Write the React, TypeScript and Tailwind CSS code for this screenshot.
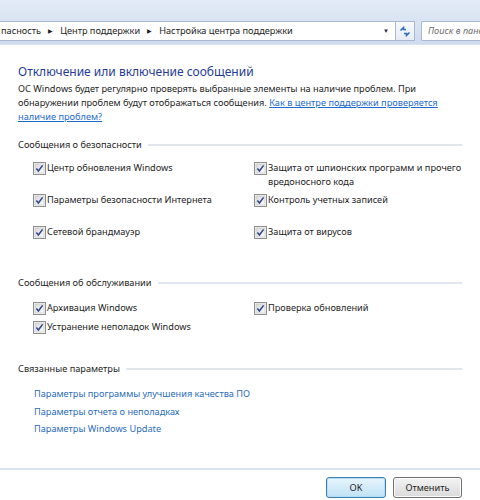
import React from 'react';

const FONT = '"Noto Sans", "Liberation Sans", sans-serif';

const CheckBox = () => (
  <svg width="13" height="13" viewBox="0 0 13 13" className="shrink-0">
    <defs>
      <linearGradient id="cbg" x1="0" y1="0" x2="1" y2="1">
        <stop offset="0" stopColor="#d8d8d8" />
        <stop offset="1" stopColor="#fbfbfb" />
      </linearGradient>
    </defs>
    <rect x="0.5" y="0.5" width="12" height="12" fill="#f4f4f4" stroke="#8e8f8f" />
    <rect x="2" y="2" width="9" height="9" fill="url(#cbg)" stroke="#c6c6c6" strokeWidth="0.6" />
    <path d="M3.4 6.6 L5.4 9 L9.6 3.4" fill="none" stroke="#2a448e" strokeWidth="1.5" />
  </svg>
);

const Option = ({ label }: { label: React.ReactNode }) => (
  <div className="flex items-start gap-[1px]">
    <div className="pt-[0.5px]">
      <CheckBox />
    </div>
    <span className="leading-[14px] text-[#1e1e1e] whitespace-nowrap">{label}</span>
  </div>
);

const SectionHeader = ({ title }: { title: string }) => (
  <div className="flex items-center gap-[6px] pr-[18px] h-[14px]">
    <span className="text-[#1e1e1e] leading-[14px] whitespace-nowrap">{title}</span>
    <div className="h-[2px] flex-1 bg-[#e1e6ee]" />
  </div>
);

export default function App() {
  return (
    <div
      className="w-[480px] h-[500px] bg-white overflow-hidden flex flex-col text-[9.2px]"
      style={{ fontFamily: FONT }}
    >
      {/* nav bar */}
      <div className="h-[45px] shrink-0 bg-gradient-to-b from-[#e2ebf6] to-[#cfdcee] flex items-start pt-[21px] gap-[6px] border-b border-[#dbe4ef]">
        <div className="flex items-center h-[20px] w-[415px] shrink-0">
          <div className="flex items-center h-full w-[396px] bg-white border border-l-0 border-[#a9b8cc] text-[#1e1e1e]">
            <span className="pl-[1px]">пасность</span>
            <span className="mx-[7px] text-[6px]">▶</span>
            <span>Центр поддержки</span>
            <span className="mx-[7px] text-[6px]">▶</span>
            <span className="whitespace-nowrap">Настройка центра поддержки</span>
            <div className="flex-1" />
            <span className="text-[6px] mr-[6px] text-[#1e2a4a]">▼</span>
          </div>
          <div className="h-full w-[19px] bg-gradient-to-b from-[#f8fafd] to-[#e6edf7] border border-l-0 border-[#a9b8cc] flex items-center justify-center">
            <svg width="12" height="11" viewBox="0 0 12 11">
              <path d="M1.5 4.5 L4.5 1.5 L4.5 3.5 L7 3.5" fill="none" stroke="#2d6bc4" strokeWidth="1.5" />
              <path d="M10.5 6.5 L7.5 9.5 L7.5 7.5 L5 7.5" fill="none" stroke="#2d6bc4" strokeWidth="1.5" />
            </svg>
          </div>
        </div>
        <div className="h-[20px] flex-1 bg-white border border-r-0 border-[#a9b8cc] rounded-l-[2px] flex items-center pl-[6px] italic text-[#6d6d6d] whitespace-nowrap overflow-hidden">
          Поиск в панели управления
        </div>
      </div>

      {/* content */}
      <div className="flex-1 flex flex-col pl-[18px]">
        <div className="mt-[17px] text-[12px] leading-[20px] text-[#1f3d99] whitespace-nowrap">
          Отключение или включение сообщений
        </div>
        <div className="leading-[14px] text-[#1e1e1e]">
          <div className="whitespace-nowrap">ОС Windows будет регулярно проверять выбранные элементы на наличие проблем. При</div>
          <div className="whitespace-nowrap">
            обнаружении проблем будут отображаться сообщения.{' '}
            <span className="text-[#1a6ad0] underline">Как в центре поддержки проверяется</span>
          </div>
          <div>
            <span className="text-[#1a6ad0] underline">наличие проблем?</span>
          </div>
        </div>

        <div className="mt-[14px]">
          <SectionHeader title="Сообщения о безопасности" />
        </div>
        <div className="mt-[9px] pl-[15px] grid grid-cols-[221px_1fr] auto-rows-[32px] pr-[18px]">
          <Option label="Центр обновления Windows" />
          <Option label={<>Защита от шпионских программ и прочего<br />вредоносного кода</>} />
          <Option label="Параметры безопасности Интернета" />
          <Option label="Контроль учетных записей" />
          <Option label="Сетевой брандмауэр" />
          <Option label="Защита от вирусов" />
        </div>

        <div className="mt-[19px]">
          <SectionHeader title="Сообщения об обслуживании" />
        </div>
        <div className="mt-[11px] pl-[15px] grid grid-cols-[221px_1fr] auto-rows-[19px] pr-[18px]">
          <Option label="Архивация Windows" />
          <Option label="Проверка обновлений" />
          <Option label="Устранение неполадок Windows" />
        </div>

        <div className="mt-[23px]">
          <SectionHeader title="Связанные параметры" />
        </div>
        <div className="mt-[9px] pl-[16px] flex flex-col leading-[17.5px] text-[#2a6cc0]">
          <span>Параметры программы улучшения качества ПО</span>
          <span>Параметры отчета о неполадках</span>
          <span>Параметры Windows Update</span>
        </div>
      </div>

      {/* footer */}
      <div className="h-[32px] shrink-0 border-t-2 border-[#dde3ec] flex items-start justify-end gap-[7px] pt-[7px] pr-[18px]">
        <button className="w-[60px] h-[21px] rounded-[3px] border border-[#3c7fb1] bg-gradient-to-b from-[#e8f5fc] to-[#bfe2f5] text-[#1e1e1e] shadow-[inset_0_0_0_1px_#b4def6]">
          OK
        </button>
        <button className="w-[69px] h-[21px] rounded-[3px] border border-[#707070] bg-gradient-to-b from-[#f3f3f3] to-[#dadada] text-[#1e1e1e] shadow-[inset_0_0_0_1px_#fcfcfc]">
          Отменить
        </button>
      </div>
    </div>
  );
}
